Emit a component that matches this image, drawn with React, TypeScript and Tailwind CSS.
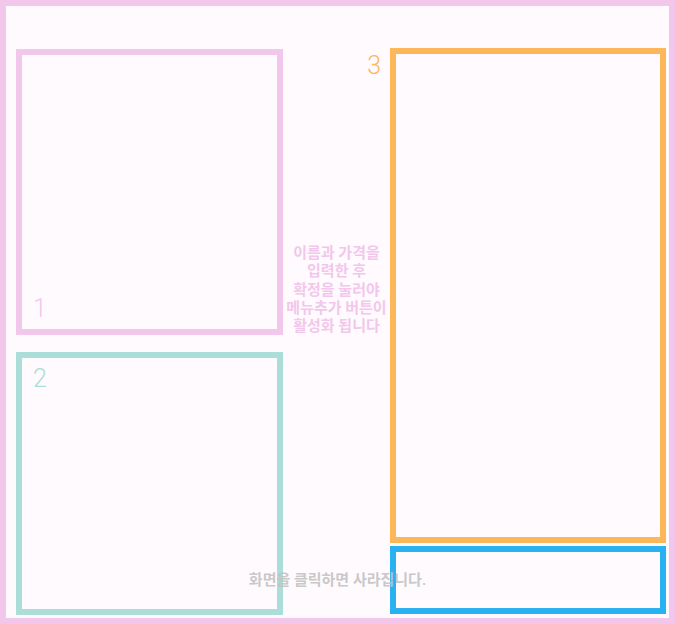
export default function App() {
  return (
    <div
      className="relative w-[675px] h-[624px] border-[6px] border-[#f2c7eb] bg-[#fffafd] overflow-hidden"
      style={{ fontFamily: 'Roboto, "Noto Sans CJK KR", sans-serif' }}
    >
      <div className="flex pl-[10px] pt-[42px]">
        {/* left column: steps 1 and 2 */}
        <div className="flex flex-col w-[267px] mt-px">
          <div className="relative h-[286px] border-[6px] border-[#f2c7eb]">
            <span className="absolute left-[11px] bottom-[2px] text-[25px] font-light leading-[36px] text-[#f2c7eb]">
              1
            </span>
          </div>
          <div className="relative h-[263px] mt-[17px] border-[6px] border-[#abded8]">
            <span className="absolute left-[11px] top-[7px] text-[25px] font-light leading-[28px] text-[#abded8]">
              2
            </span>
          </div>
        </div>

        {/* middle hint */}
        <div className="relative w-[107px]">
          <p className="mt-[196px] text-center text-[15px] font-bold leading-[18.3px] text-[#f2c7eb]">
            이름과 가격을
            <br />
            입력한 후
            <br />
            확정을 눌러야
            <br />
            메뉴추가 버튼이
            <br />
            활성화 됩니다
          </p>
          <span className="absolute right-[9px] top-[4px] text-[25px] font-light leading-[28px] text-[#fdb75b]">
            3
          </span>
        </div>

        {/* right column: step 3 and 4 */}
        <div className="flex flex-col w-[276px]">
          <div className="h-[495px] border-[6px] border-[#fdb75b]" />
          <div className="h-[68px] mt-[3px] border-[6px] border-[#29b1f2]" />
        </div>
      </div>

      <p className="absolute left-0 right-0 top-[564px] text-center text-[15px] font-semibold leading-[20px] text-[#c2c2c2]/90">
        화면을 클릭하면 사라집니다.
      </p>
    </div>
  );
}
